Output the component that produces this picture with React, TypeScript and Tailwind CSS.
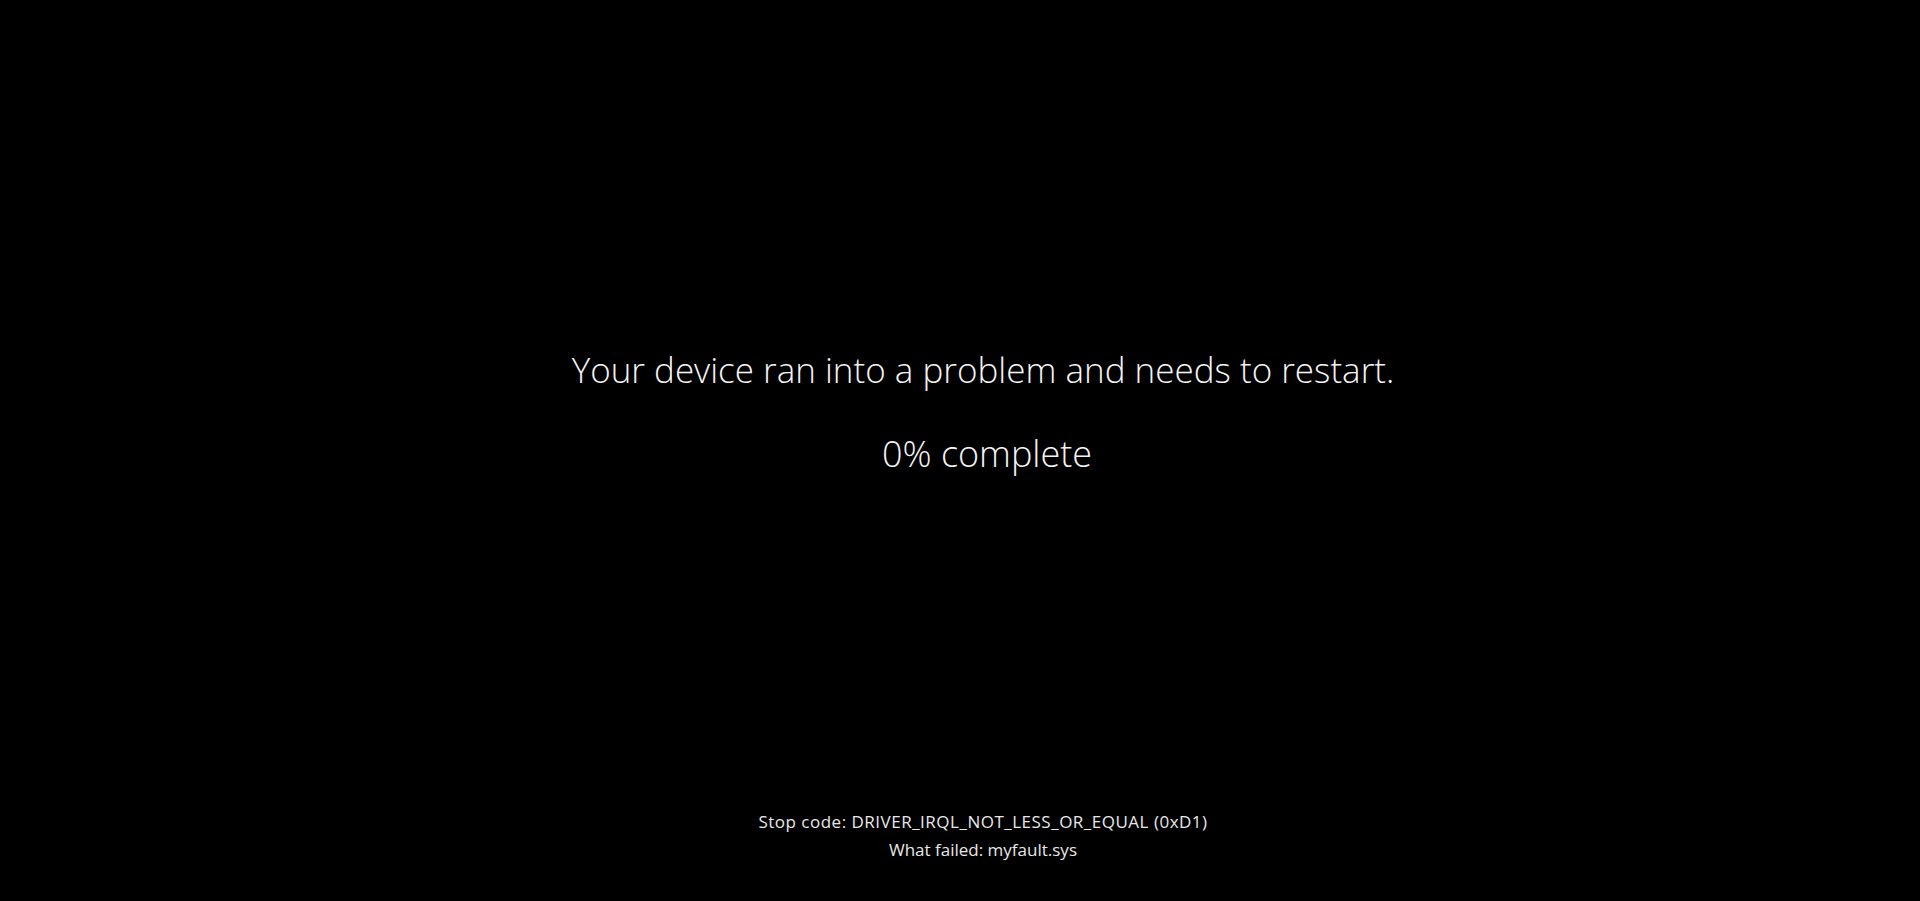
import React from "react";

export default function App() {
  return (
    <div
      className="w-[1920px] h-[901px] bg-black text-[#f4f4f4] flex flex-col items-center pl-[46px]"
      style={{ fontFamily: '"Open Sans", "Noto Sans", sans-serif' }}
    >
      <div className="h-[345px] shrink-0" />
      <h1 className="text-[35px] leading-[50px] font-[350] whitespace-nowrap">
        Your device ran into a problem and needs to restart.
      </h1>
      <div className="h-[34px] shrink-0" />
      <p className="text-[36px] leading-[50px] font-[350] whitespace-nowrap pl-[8px]">0% complete</p>
      <div className="h-[329px] shrink-0" />
      <div className="text-[17px] leading-[28px] text-center text-[#e8e8e8] whitespace-nowrap">
        <p className="tracking-[0.5px]">Stop code: DRIVER_IRQL_NOT_LESS_OR_EQUAL (0xD1)</p>
        <p>What failed: myfault.sys</p>
      </div>
    </div>
  );
}
